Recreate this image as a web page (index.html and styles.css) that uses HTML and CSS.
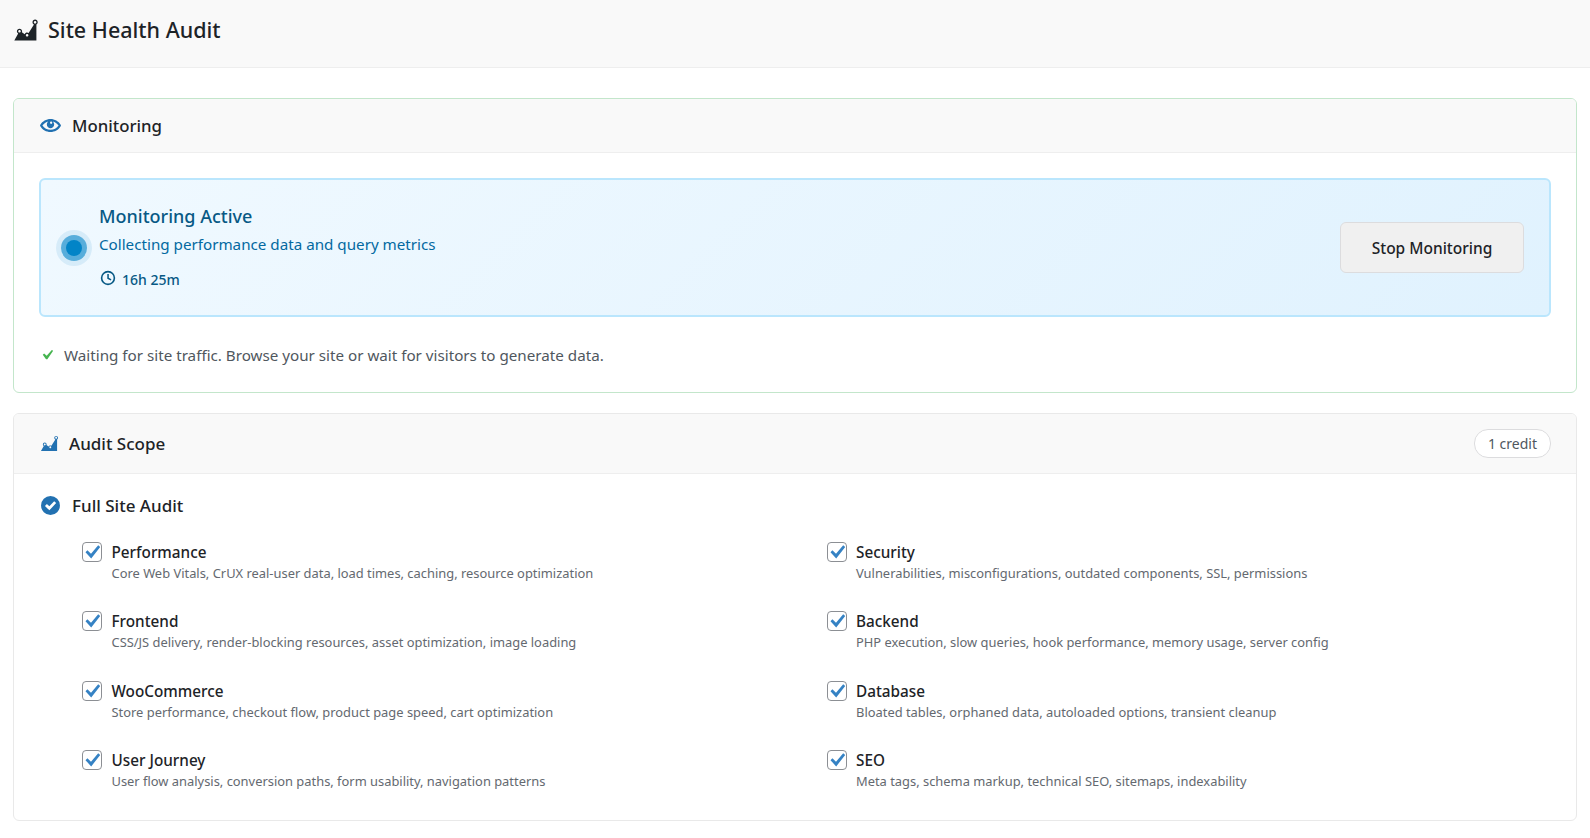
FILE: index.html
```html
<!DOCTYPE html>
<html lang="en">
<head>
  <meta charset="UTF-8">
  <meta name="viewport" content="width=device-width, initial-scale=1.0">
  <title>Site Health Audit</title>
  <link rel="stylesheet" href="styles.css">
</head>
<body>
  <svg class="sprites" width="0" height="0" aria-hidden="true">
    <symbol id="icon-chart" viewBox="0 0 20 20">
      <path fill-rule="evenodd" d="M18 18l.01-12.28c.59-.35.99-.99.99-1.72 0-1.1-.9-2-2-2s-2 .9-2 2c0 .8.47 1.48 1.14 1.8l-4.13 6.58c-.33-.24-.73-.38-1.16-.38-.84 0-1.55.51-1.85 1.24l-2.14-1.53c.09-.22.14-.46.14-.71 0-1.11-.89-2-2-2-1.1 0-2 .89-2 2 0 .73.4 1.36.98 1.71L1 18h17zM17 3c.55 0 1 .45 1 1s-.45 1-1 1-1-.45-1-1 .45-1 1-1zM5 10c.55 0 1 .45 1 1s-.45 1-1 1-1-.45-1-1 .45-1 1-1zm5.85 3c.55 0 1 .45 1 1s-.45 1-1 1-1-.45-1-1 .45-1 1-1z"/>
    </symbol>
    <symbol id="icon-eye" viewBox="0 0 20 20">
      <path d="M19.7 9.4C17.7 6 14 3.9 10 3.9S2.3 6 .3 9.4L0 10l.3.6c2 3.4 5.7 5.5 9.7 5.5s7.7-2.1 9.7-5.5l.3-.6-.3-.6zM10 14.1c-3.1 0-6-1.6-7.7-4.1C3.6 8 5.7 6.6 8 6.1c-.9.6-1.5 1.7-1.5 2.9 0 1.9 1.6 3.5 3.5 3.5s3.5-1.6 3.5-3.5c0-1.2-.6-2.3-1.5-2.9 2.3.5 4.4 1.9 5.7 3.9-1.7 2.5-4.6 4.1-7.7 4.1z"/>
      <circle cx="10.6" cy="7.4" r="1.1" fill="#f9f9f9"/>
    </symbol>
    <symbol id="icon-clock" viewBox="0 0 20 20">
      <path d="M10 2a8 8 0 1 0 0 16 8 8 0 0 0 0-16zm0 14.2a6.2 6.2 0 1 1 0-12.4 6.2 6.2 0 0 1 0 12.4zM10.9 5.5H9.2v5.2l3.8 2.2.8-1.4-2.9-1.7z"/>
    </symbol>
    <symbol id="icon-check" viewBox="0 0 20 20">
      <path d="M14.83 4.89l1.34.94-5.81 8.38H9.02L5.78 9.67l1.34-1.25 2.57 2.4z"/>
    </symbol>
    <symbol id="icon-tick" viewBox="0 0 20 20">
      <path d="M3.5 10.2l1.9-1.9 3.6 3.4 7.2-8.4 2 1.6-9 11.5z"/>
    </symbol>
    <symbol id="icon-check-circle" viewBox="0 0 20 20">
      <path d="M10 1a9 9 0 1 0 0 18 9 9 0 0 0 0-18zm-1.1 13.6L4.7 10.4l1.9-1.9 2.3 2.3 4.6-4.9 1.9 1.8z"/>
    </symbol>
  </svg>

  <header class="page-header">
    <svg class="icon page-icon"><use href="#icon-chart"/></svg>
    <h1>Site Health Audit</h1>
  </header>

  <main class="content">
    <section class="card card-active">
      <div class="card-head">
        <h2 class="card-title">
          <svg class="icon title-icon"><use href="#icon-eye"/></svg>
          Monitoring
        </h2>
      </div>
      <div class="card-body">
        <div class="status-box">
          <span class="pulse"></span>
          <div class="status-text">
            <h3>Monitoring Active</h3>
            <p>Collecting performance data and query metrics</p>
            <div class="elapsed">
              <svg class="icon clock-icon"><use href="#icon-clock"/></svg>
              16h 25m
            </div>
          </div>
          <button class="button">Stop Monitoring</button>
        </div>
        <p class="waiting">
          <svg class="icon waiting-icon"><use href="#icon-check"/></svg>
          Waiting for site traffic. Browse your site or wait for visitors to generate data.
        </p>
      </div>
    </section>

    <section class="card">
      <div class="card-head scope-head">
        <h2 class="card-title scope-title">
          <svg class="icon scope-icon"><use href="#icon-chart"/></svg>
          Audit Scope
        </h2>
        <span class="credit">1 credit</span>
      </div>
      <div class="card-body scope-body">
        <div class="full-audit">
          <svg class="icon title-icon"><use href="#icon-check-circle"/></svg>
          Full Site Audit
        </div>
        <div class="scope-grid">
          <div class="scope-item">
            <span class="checkbox"><svg class="icon"><use href="#icon-tick"/></svg></span>
            <div><strong>Performance</strong><small>Core Web Vitals, CrUX real-user data, load times, caching, resource optimization</small></div>
          </div>
          <div class="scope-item">
            <span class="checkbox"><svg class="icon"><use href="#icon-tick"/></svg></span>
            <div><strong>Security</strong><small>Vulnerabilities, misconfigurations, outdated components, SSL, permissions</small></div>
          </div>
          <div class="scope-item">
            <span class="checkbox"><svg class="icon"><use href="#icon-tick"/></svg></span>
            <div><strong>Frontend</strong><small>CSS/JS delivery, render-blocking resources, asset optimization, image loading</small></div>
          </div>
          <div class="scope-item">
            <span class="checkbox"><svg class="icon"><use href="#icon-tick"/></svg></span>
            <div><strong>Backend</strong><small>PHP execution, slow queries, hook performance, memory usage, server config</small></div>
          </div>
          <div class="scope-item">
            <span class="checkbox"><svg class="icon"><use href="#icon-tick"/></svg></span>
            <div><strong>WooCommerce</strong><small>Store performance, checkout flow, product page speed, cart optimization</small></div>
          </div>
          <div class="scope-item">
            <span class="checkbox"><svg class="icon"><use href="#icon-tick"/></svg></span>
            <div><strong>Database</strong><small>Bloated tables, orphaned data, autoloaded options, transient cleanup</small></div>
          </div>
          <div class="scope-item">
            <span class="checkbox"><svg class="icon"><use href="#icon-tick"/></svg></span>
            <div><strong>User Journey</strong><small>User flow analysis, conversion paths, form usability, navigation patterns</small></div>
          </div>
          <div class="scope-item">
            <span class="checkbox"><svg class="icon"><use href="#icon-tick"/></svg></span>
            <div><strong>SEO</strong><small>Meta tags, schema markup, technical SEO, sitemaps, indexability</small></div>
          </div>
        </div>
      </div>
    </section>
  </main>
</body>
</html>
```

FILE: styles.css
```css
* {
  margin: 0;
  padding: 0;
  box-sizing: border-box;
  font-family: 'Noto Sans', 'Open Sans', sans-serif;
}

body {
  background: white;
  color: #1d2327;
  font-size: 14px;
}

.sprites {
  display: block;
  height: 0;
}

.icon {
  display: block;
  fill: currentColor;
  flex: none;
}

.page-header {
  display: flex;
  align-items: center;
  gap: 9px;
  height: 68px;
  padding: 0 0 8px 13px;
  background: #f9f9f9;
  border-bottom: 1px solid #eeeeee;
}

.page-header h1 {
  font-size: 21.5px;
  font-weight: 500;
}

.page-icon {
  width: 26px;
  height: 26px;
}

.content {
  padding: 30px 13px 0;
}

.card {
  background: white;
  border: 1px solid #e9e9e9;
  border-radius: 6px;
  margin-bottom: 20px;
  overflow: hidden;
}

.card-active {
  border-color: #c3e6cb;
}

.card-head {
  display: flex;
  align-items: center;
  justify-content: space-between;
  height: 54px;
  padding: 0 25px 0 26px;
  background: #f9f9f9;
  border-bottom: 1px solid #eeeeee;
}

.scope-head {
  height: 60px;
}

.card-title {
  display: flex;
  align-items: center;
  gap: 11px;
  font-size: 16.8px;
  font-weight: 500;
}

.scope-title {
  gap: 10px;
  font-size: 17px;
}

.title-icon {
  width: 21px;
  height: 21px;
  color: #2271b1;
}

.scope-icon {
  width: 19px;
  height: 19px;
  color: #2271b1;
}

.card-body {
  padding: 25px 25px 27px;
}

.status-box {
  display: flex;
  align-items: center;
  height: 139px;
  padding: 0 25px;
  background: linear-gradient(135deg, #f0f9ff 0%, #e0f2fe 100%);
  border: 2px solid #bae6fd;
  border-radius: 6px;
}

.pulse {
  flex: none;
  width: 16px;
  height: 16px;
  margin-right: 17px;
  background: #0284c7;
  border-radius: 50%;
  box-shadow: 0 0 0 5px rgba(2, 132, 199, 0.6), 0 0 0 10px rgba(2, 132, 199, 0.1);
}

.status-text {
  flex: 1;
  padding-bottom: 2px;
}

.status-text h3 {
  font-size: 18px;
  font-weight: 500;
  color: #075985;
  margin-bottom: 6px;
}

.status-text p {
  font-size: 15.2px;
  color: #0369a1;
}

.elapsed {
  display: flex;
  align-items: flex-start;
  gap: 5px;
  margin-top: 16px;
  font-size: 14px;
  font-weight: 500;
  color: #075985;
}

.clock-icon {
  width: 18px;
  height: 18px;
  margin-top: -1px;
}

.button {
  width: 184px;
  height: 51px;
  background: #f0f0f0;
  border: 1px solid #dcdcde;
  border-radius: 6px;
  color: #1d2327;
  font-size: 15.5px;
  font-weight: 500;
  cursor: pointer;
}

.waiting {
  display: flex;
  align-items: center;
  gap: 7px;
  margin-top: 28px;
  font-size: 15.2px;
  color: #50575e;
}

.waiting-icon {
  width: 20px;
  height: 20px;
  margin-left: -2px;
  color: #46b450;
}

.credit {
  padding: 4px 13px;
  background: white;
  border: 1px solid #dcdcde;
  border-radius: 14px;
  color: #50575e;
  font-size: 14px;
}

.scope-body {
  padding: 20px 25px 30px 26px;
}

.full-audit {
  display: flex;
  align-items: center;
  gap: 11px;
  font-size: 17px;
  font-weight: 500;
}

.scope-grid {
  display: grid;
  grid-template-columns: 1fr 1fr;
  column-gap: 20px;
  row-gap: 29.4px;
  margin: 25px 0 0 42px;
}

.scope-item {
  display: flex;
  gap: 9.5px;
}

.scope-item strong {
  display: block;
  font-size: 15.3px;
  font-weight: 500;
}

.scope-item small {
  display: block;
  margin-top: 2px;
  font-size: 12.9px;
  color: #646970;
}

.checkbox {
  flex: none;
  width: 20px;
  height: 20px;
  background: white;
  border: 1px solid #8c8f94;
  border-radius: 4px;
  color: #3582c4;
}

.checkbox .icon {
  width: 20px;
  height: 20px;
  margin: -1px;
}
```
